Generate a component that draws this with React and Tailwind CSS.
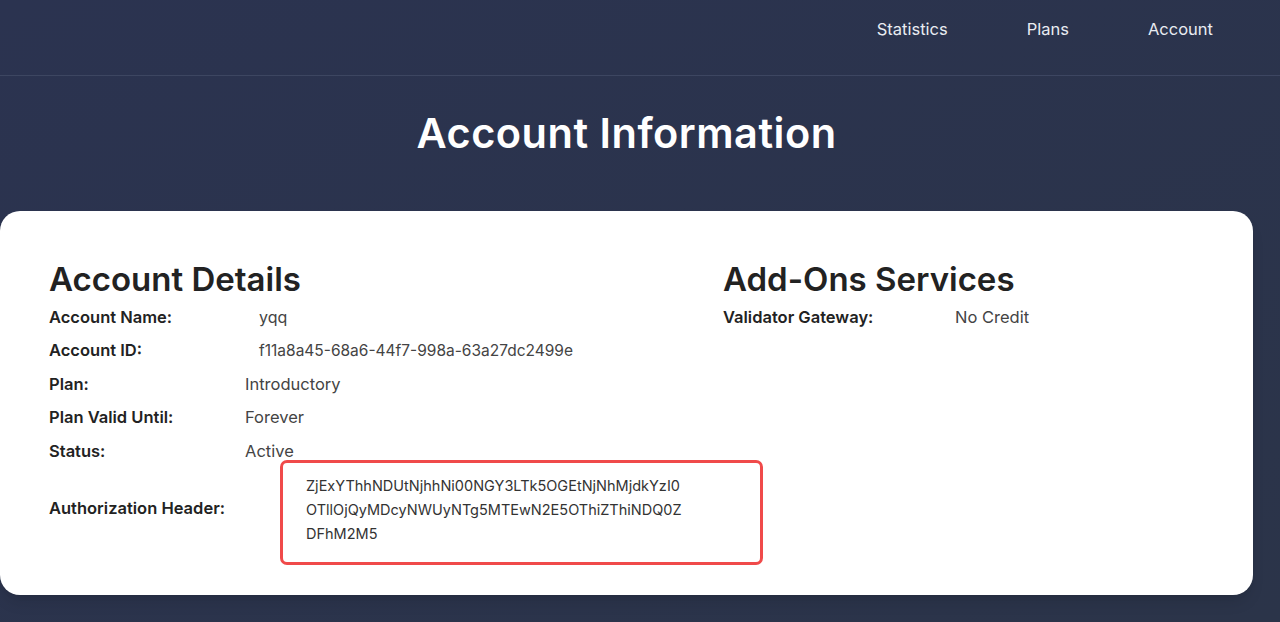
export default function App() {
  const font = { fontFamily: "Inter, 'Open Sans', sans-serif" };
  const row = "flex h-[33.5px] items-center";
  return (
    <div className="min-h-[622px] w-[1280px] overflow-hidden bg-gradient-to-br from-[#2b3350] to-[#2b3449]" style={font}>
      <div className="w-[1253px]">
        <nav className="h-[75px] flex justify-end items-start pt-[17px] pr-[40px] gap-[79px] text-[16.5px] text-[#e9ecf2]">
          <span>Statistics</span>
          <span>Plans</span>
          <span>Account</span>
        </nav>
      </div>
      <div className="h-px w-full bg-[#3d4661]" />
      <div className="w-[1253px]">
        <h1 className="text-center text-white font-semibold text-[41.5px] leading-none pt-[37px] pb-[56px] tracking-[0.5px]">
          Account Information
        </h1>
        <div className="bg-white rounded-[20px] h-[384px] pl-[49px] pt-[52px] flex shadow-lg">
          <div className="w-[674px] shrink-0">
            <h2 className="text-[33px] font-semibold text-[#222] leading-none mb-[5px]">Account Details</h2>
            <div className="text-[16px] text-[#222]">
              <div className={row}>
                <span className="w-[210px] shrink-0 font-semibold text-[16.5px]">Account Name:</span>
                <span className="text-[#444]">yqq</span>
              </div>
              <div className={row}>
                <span className="w-[210px] shrink-0 font-semibold text-[16.5px]">Account ID:</span>
                <span className="text-[#444] text-[15.5px]">f11a8a45-68a6-44f7-998a-63a27dc2499e</span>
              </div>
              <div className={row}>
                <span className="w-[196px] shrink-0 font-semibold text-[16.5px]">Plan:</span>
                <span className="text-[#444] text-[16.5px]">Introductory</span>
              </div>
              <div className={row}>
                <span className="w-[196px] shrink-0 font-semibold text-[16.5px]">Plan Valid Until:</span>
                <span className="text-[#444] text-[16.5px]">Forever</span>
              </div>
              <div className={row}>
                <span className="w-[196px] shrink-0 font-semibold text-[16.5px]">Status:</span>
                <span className="text-[#444] text-[16.5px]">Active</span>
              </div>
              <div className="flex items-start mt-[-8px]">
                <span className="w-[231px] shrink-0 font-semibold text-[16.5px] mt-[36px]">Authorization Header:</span>
                <div className="w-[483px] shrink-0 h-[105px] border-[3px] border-[#f04a4a] rounded-[7px] pl-[23px] pt-[11px] text-[#333] text-[14.5px] leading-[24px]">
                  <div>ZjExYThhNDUtNjhhNi00NGY3LTk5OGEtNjNhMjdkYzI0</div>
                  <div>OTllOjQyMDcyNWUyNTg5MTEwN2E5OThiZThiNDQ0Z</div>
                  <div>DFhM2M5</div>
                </div>
              </div>
            </div>
          </div>
          <div>
            <h2 className="text-[33px] font-semibold text-[#222] leading-none mb-[5px]">Add-Ons Services</h2>
            <div className="flex h-[33.5px] items-center text-[16.5px]">
              <span className="w-[232px] shrink-0 font-semibold text-[#222]">Validator Gateway:</span>
              <span className="text-[#444]">No Credit</span>
            </div>
          </div>
        </div>
      </div>
    </div>
  );
}
